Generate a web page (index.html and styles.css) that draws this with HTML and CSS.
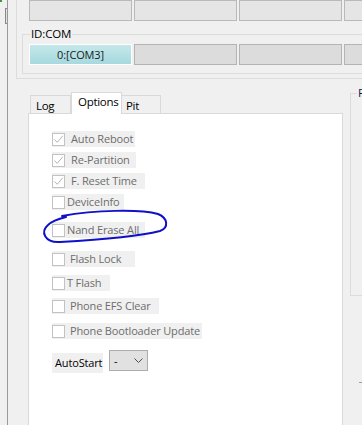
FILE: index.html
```html
<!DOCTYPE html>
<html>
<head>
<meta charset="utf-8">
<link rel="stylesheet" href="styles.css">
</head>
<body>
<div class="page">
  <div class="strip"><span class="dot"></span><span class="grip"></span></div>
  <div class="main">
    <div class="frame">
      <div class="slots">
        <div class="slot"></div>
        <div class="slot"></div>
        <div class="slot"></div>
        <div class="slot"></div>
      </div>
      <div class="idgroup">
        <span class="legend">ID:COM</span>
        <div class="slots">
          <div class="slot com active">0:[COM3]</div>
          <div class="slot com"></div>
          <div class="slot com"></div>
          <div class="slot com"></div>
        </div>
      </div>
    </div>
    <div class="lower">
      <div class="tabs">
        <div class="tabstrip">
          <div class="tab t-log">Log</div>
          <div class="tab t-opt sel">Options</div>
          <div class="tab t-pit">Pit</div>
        </div>
        <div class="panel">
          <div class="opt r1"><span class="cb on"><svg viewBox="0 0 11 11"><polyline points="1.5,5.5 4.2,8.3 9.8,1.8"/></svg></span><span class="lbl sp4">Auto Reboot</span></div>
          <div class="opt r2"><span class="cb on"><svg viewBox="0 0 11 11"><polyline points="1.5,5.5 4.2,8.3 9.8,1.8"/></svg></span><span class="lbl sp4">Re-Partition</span></div>
          <div class="opt r3"><span class="cb on"><svg viewBox="0 0 11 11"><polyline points="1.5,5.5 4.2,8.3 9.8,1.8"/></svg></span><span class="lbl sp4">F. Reset Time</span></div>
          <div class="opt r4"><span class="cb"></span><span class="lbl">DeviceInfo</span></div>
          <div class="opt r5"><span class="cb"></span><span class="lbl">Nand Erase All</span></div>
          <div class="opt r6"><span class="cb"></span><span class="lbl sp3">Flash Lock</span></div>
          <div class="opt r7"><span class="cb"></span><span class="lbl">T Flash</span></div>
          <div class="opt r8"><span class="cb"></span><span class="lbl sp3">Phone EFS Clear</span></div>
          <div class="opt r9"><span class="cb"></span><span class="lbl sp3">Phone Bootloader Update</span></div>
          <div class="autorow">
            <span class="autolbl">AutoStart</span>
            <span class="combo"><span class="val">-</span><svg class="chev" viewBox="0 0 9 5"><polyline points="0.5,0.5 4.5,4.5 8.5,0.5"/></svg></span>
          </div>
        </div>
      </div>
      <div class="rcol">
        <div class="rgroup"><span class="legend f">F</span></div>
        <div class="dash"></div>
      </div>
    </div>
  </div>
  <svg class="mark" viewBox="0 0 362 425" width="362" height="425">
    <path d="M 62 216 C 95 210, 140 209, 158 214 C 168 218, 169 228, 160 231 C 140 236, 95 240, 60 242 C 45 243, 40 232, 48 225 C 52 221, 58 219, 66 217"/>
  </svg>
</div>
</body>
</html>
```
FILE: styles.css
```css
html, body {
  margin: 0;
  padding: 0;
  background: #f0f0f0;
  overflow: hidden;
}
body {
  font-family: "Open Sans", "Noto Sans", sans-serif;
  font-size: 11px;
  letter-spacing: -0.15px;
  color: #000;
}
.page {
  position: relative;
  width: 362px;
  height: 425px;
  display: flex;
  overflow: hidden;
}
.strip {
  width: 7px;
  flex: none;
  border-right: 1px solid #9a9a9a;
  display: flex;
  flex-direction: column;
}
.dot {
  width: 2px;
  height: 2px;
  background: #3c9a3c;
}
.grip {
  margin: 6px 0 0 5px;
  width: 1px;
  height: 14px;
  border: 1px solid #8a8a8a;
  border-right: none;
  background: #e0e0e0;
}
.main {
  flex: 1;
  display: flex;
  flex-direction: column;
  min-width: 0;
}
.frame {
  margin-left: 8px;
  border-left: 1px solid #dcdcdc;
  border-bottom: 1px solid #dcdcdc;
}
.slots {
  display: flex;
  gap: 2px;
  margin-left: 12px;
}
.slot {
  flex: none;
  width: 103px;
  height: 21px;
  box-sizing: border-box;
  background: #e5e5e5;
  border: 1px solid #b9b9b9;
}
.idgroup {
  position: relative;
  margin: 13px 0 4px 5px;
  border: 1px solid #dcdcdc;
  border-right: none;
  padding: 9px 0 8px 0;
}
.idgroup .slots {
  margin-left: 6px;
}
.slot.com {
  background: #dcdcdc;
  border-color: #b4b4b4;
}
.slot.active {
  background: linear-gradient(#c4e8eb, #a6d9de);
  border: 1px solid #ffffff;
  display: flex;
  align-items: center;
  justify-content: center;
  color: #1a1a1a;
  line-height: 1;
}
.legend {
  position: absolute;
  top: -9px;
  left: 7px;
  background: #f0f0f0;
  padding: 0 1px;
  line-height: 16px;
  font-size: 11.5px;
}
.lower {
  display: flex;
  margin-top: 14px;
  margin-left: 20px;
}
.tabs {
  width: 315px;
  flex: none;
  display: flex;
  flex-direction: column;
}
.tabstrip {
  display: flex;
  align-items: flex-end;
  height: 20px;
  padding-left: 2px;
}
.tab {
  box-sizing: border-box;
  height: 18px;
  border: 1px solid #d9d9d9;
  border-bottom: none;
  background: #f0f0f0;
  line-height: 19px;
  padding-left: 5px;
  white-space: nowrap;
  font-size: 11.5px;
  letter-spacing: -0.3px;
}
.t-log { width: 41px; }
.t-opt { width: 51px; }
.t-pit { width: 39px; padding-left: 4px; border-left: none; }
.tab.sel {
  position: relative;
  z-index: 1;
  height: 22px;
  margin-bottom: -1px;
  background: #fff;
  line-height: 17px;
  padding-left: 6px;
}
.panel {
  box-sizing: border-box;
  height: 340px;
  border: 1px solid #d9d9d9;
  background: #fff;
  padding: 17px 0 0 23px;
  display: flex;
  flex-direction: column;
  align-items: flex-start;
}
.opt {
  height: 16px;
  box-sizing: border-box;
  background: #f0f0f0;
  display: flex;
  align-items: center;
  color: #6d6d6d;
}
.r1 { width: 83px; }
.r2 { width: 84px; margin-top: 5px; }
.r3 { width: 93px; margin-top: 5px; }
.r4 { width: 72px; margin-top: 5px; }
.r5 { width: 93px; margin-top: 12px; }
.r6 { width: 83px; margin-top: 13px; }
.r7 { width: 58px; margin-top: 8px; }
.r8 { width: 107px; margin-top: 7px; }
.r9 { width: 150px; margin-top: 9px; }
.cb {
  flex: none;
  width: 13px;
  height: 13px;
  box-sizing: border-box;
  border: 1px solid #c2c2c2;
  background: #fff;
  display: flex;
  align-items: center;
  justify-content: center;
}
.cb svg {
  width: 11px;
  height: 11px;
}
.cb polyline {
  fill: none;
  stroke: #b4b4b4;
  stroke-width: 1;
}
.lbl {
  margin-left: 2px;
  white-space: nowrap;
  line-height: 16px;
}
.sp4 { padding-left: 4px; }
.sp3 { padding-left: 3px; }
.autorow {
  display: flex;
  align-items: flex-start;
  margin-top: 11px;
}
.autolbl {
  margin-top: 3px;
  width: 51px;
  height: 20px;
  box-sizing: border-box;
  background: #f0f0f0;
  padding-left: 3px;
  line-height: 20px;
  white-space: nowrap;
}
.combo {
  margin-left: 6px;
  width: 39px;
  height: 21px;
  box-sizing: border-box;
  background: #e1e1e1;
  border: 1px solid #adadad;
  display: flex;
  align-items: center;
  justify-content: space-between;
  padding: 0 4px 0 4px;
}
.val { line-height: 18px; }
.chev {
  width: 9px;
  height: 5px;
}
.chev polyline {
  fill: none;
  stroke: #505050;
  stroke-width: 1;
}
.rcol {
  margin-left: 7px;
  flex: 1;
  display: flex;
  flex-direction: column;
}
.rgroup {
  position: relative;
  height: 203px;
  box-sizing: border-box;
  border: 1px solid #dcdcdc;
  border-right: none;
}
.legend.f {
  left: 6px;
  top: -9px;
  color: #0a1a4a;
}
.dash {
  margin: 86px 0 0 9px;
  height: 1px;
  background: #a0a0a0;
}
.mark {
  position: absolute;
  left: 0;
  top: 0;
  pointer-events: none;
}
.mark path {
  fill: none;
  stroke: #1010c8;
  stroke-width: 2;
  stroke-linecap: round;
}
```
